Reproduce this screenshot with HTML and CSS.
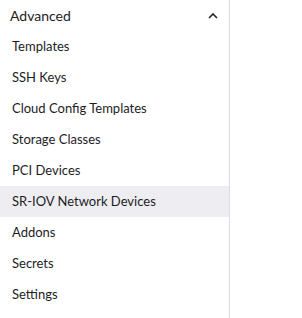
FILE: index.html
```html
<!DOCTYPE html>
<html lang="en">
<head>
    <meta charset="UTF-8">
    <title>Advanced</title>
    <link rel="stylesheet" href="styles.css">
</head>
<body>
    <nav class="sidebar">
        <div class="group-header">
            <span>Advanced</span>
            <svg class="chevron" width="10" height="6" viewBox="0 0 10 6">
                <path d="M1 5 L5 1 L9 5" fill="none" stroke="#222" stroke-width="1.6"/>
            </svg>
        </div>
        <ul class="nav-list">
            <li>Templates</li>
            <li>SSH Keys</li>
            <li>Cloud Config Templates</li>
            <li>Storage Classes</li>
            <li>PCI Devices</li>
            <li class="active">SR-IOV Network Devices</li>
            <li>Addons</li>
            <li>Secrets</li>
            <li>Settings</li>
        </ul>
    </nav>
</body>
</html>
```

FILE: styles.css
```css
body {
    margin: 0;
    font-family: Lato, "Open Sans", sans-serif;
    background: white;
    color: #1d1d1f;
}

.sidebar {
    width: 229px;
    height: 318px;
    border-right: 1px solid #dcdee7;
}

.group-header {
    display: flex;
    justify-content: space-between;
    align-items: center;
    height: 31px;
    padding: 0 10px 0 10px;
    font-size: 14px;
}

.chevron {
    margin-right: 1px;
}

.nav-list {
    list-style: none;
    margin: 0;
    padding: 0;
}

.nav-list li {
    height: 31px;
    line-height: 31px;
    padding-left: 12px;
    font-size: 13px;
}

.nav-list li.active {
    background: #ededf2;
}
```
